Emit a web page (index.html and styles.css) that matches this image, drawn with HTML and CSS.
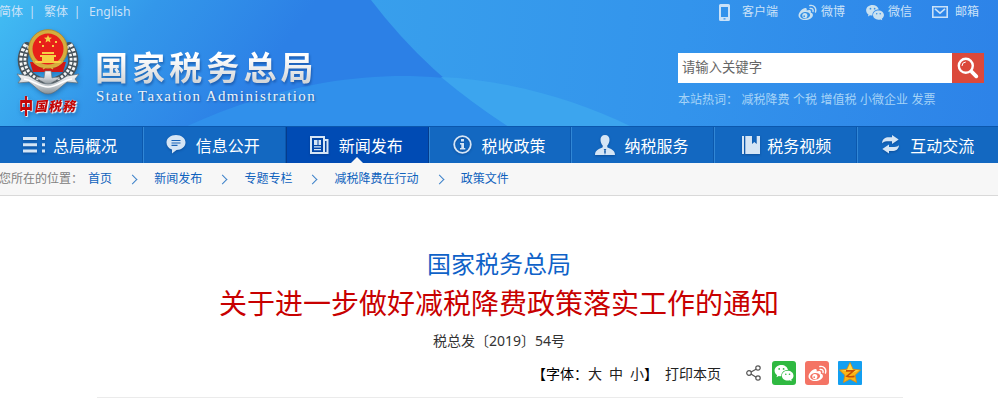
FILE: index.html
```
<!DOCTYPE html>
<html lang="zh-CN">
<head>
<meta charset="utf-8">
<title>国家税务总局</title>
<link rel="stylesheet" href="styles.css">
</head>
<body>
<svg class="defs" width="0" height="0" aria-hidden="true">
  <symbol id="wechat" viewBox="0 0 20 18">
    <path d="M7.4 1C3.5 1 .6 3.500.6 6.700c0 1.900 1 3.400 2.500 4.500L2.500 13.200l2.300-1.200c.8.200 1.600.3 2.500.3C7 8.500 10 5.800 14 5.900 13.400 3.100 10.800 1 7.400 1z"/>
    <path d="M13.700 6.800c-3.300 0-5.800 2.100-5.800 4.900s2.500 4.900 5.800 4.900c.7 0 1.400-.1 2-.3l2 1-.5-1.700c1.400-.9 2.300-2.300 2.300-3.900 0-2.800-2.600-4.900-5.800-4.900z"/>
    <g class="hole"><circle cx="5.200" cy="4.900" r=".9"/><circle cx="9.600" cy="4.900" r=".9"/><circle cx="11.800" cy="10.200" r=".8"/><circle cx="15.500" cy="10.200" r=".8"/></g>
  </symbol>
  <symbol id="weibo" viewBox="0 0 20 18">
    <path d="M8.300 4.300C9.500 4.600 9.400 6 9 7c2-.9 4.900-1.200 4.600 1.300 0 .5-.2.800-.2 1 1.500.3 2.600 1.200 2.300 2.900-.4 2.700-4 4.800-8.200 4.800C3.500 17 .5 15 .5 12.200.5 8.600 5.500 3.600 8.300 4.300z"/>
    <ellipse class="hole" cx="7.500" cy="12" rx="5.300" ry="3.500" transform="rotate(-8 7.500 12)"/>
    <circle cx="7.200" cy="12.200" r="2.700"/>
    <circle class="hole" cx="6.500" cy="12.900" r=".9"/>
    <path class="line" d="M12.800 4.700c2-.4 3.600 1.200 3 3.200M12.500 1.600c4.200-.8 7.300 2.800 5.900 6.900"/>
  </symbol>
</svg>

<header class="header">
  <svg class="header-bg" viewBox="0 0 998 127" preserveAspectRatio="none" aria-hidden="true">
    <defs>
      <linearGradient id="sky" gradientUnits="userSpaceOnUse" x1="0" y1="0" x2="210" y2="150"><stop offset="0" stop-color="#42bdf3"/><stop offset=".5" stop-color="#3397ea"/><stop offset="1" stop-color="#2c80e6"/></linearGradient>
      <linearGradient id="right" gradientUnits="userSpaceOnUse" x1="370" y1="0" x2="998" y2="60"><stop offset="0" stop-color="#389fec"/><stop offset=".5" stop-color="#3394ec"/><stop offset="1" stop-color="#2d83e8"/></linearGradient>
    </defs>
    <path fill="url(#sky)" d="M0 0h998v127H0z"/>
    <path fill="#3090eb" d="M185 127C250 98 320 76 405 76c30 0 60 5 115 8v43z"/>
    <path fill="url(#right)" d="M371 0Q428 75 509 127H998V0z"/>
    <path fill="#3ca5ee" d="M441 77C510 80 580 101 632 127H509Q472 103 441 77z"/>
  </svg>

  <div class="topbar">
    <div class="langs"><a>简体</a><i>|</i><a>繁体</a><i>|</i><a class="en">English</a></div>
    <div class="quick">
      <a class="phone"><svg width="11" height="17" viewBox="0 0 11 17"><path fill="#c9e1f8" fill-rule="evenodd" d="M1.500 0h8A1.500 1.500 0 0 1 11 1.500v14A1.500 1.500 0 0 1 9.500 17h-8A1.500 1.500 0 0 1 0 15.500v-14A1.500 1.500 0 0 1 1.500 0zM2 3v10h7V3zM4.500 14.300v1.200h2v-1.200z"/></svg>客户端</a>
      <a class="wb"><svg class="pale" width="19" height="17"><use href="#weibo"/></svg>微博</a>
      <a class="wx"><svg class="pale" width="20" height="17"><use href="#wechat"/></svg>微信</a>
      <a class="mail"><svg width="16" height="12" viewBox="0 0 16 12"><path fill="none" stroke="#c9e1f8" stroke-width="1.600" d="M.8.8h14.400v10.400H.8zM3 2.800l5 4.400 5-4.400"/></svg>邮箱</a>
    </div>
  </div>

  <div class="masthead">
    <a class="logo">
      <span class="crest">
        <svg width="64" height="66" viewBox="0 0 64 66">
          <defs><linearGradient id="silver" x1="0" y1="0" x2="0" y2="1"><stop offset="0" stop-color="#fafafa"/><stop offset=".55" stop-color="#c9ced2"/><stop offset="1" stop-color="#858e94"/></linearGradient></defs>
          <g fill="none" stroke-linecap="round">
            <path stroke="#46525a" stroke-width="10" d="M11 18C2 32 8 47 24 53M53 18c9 14 3 29-13 35"/>
            <path stroke="#f3f5f5" stroke-width="7" stroke-linecap="butt" stroke-dasharray="2.800 1.700" d="M11 16C2 32 8 47 24 53M53 16c9 16 3 31-13 37"/>
            <path stroke="#46525a" stroke-width="1.200" d="M11 18C2 32 8 47 24 53M53 18c9 14 3 29-13 35"/>
          </g>
          <path fill="#cf1a16" d="M14 33h36l-3 10H17z"/>
          <path fill="url(#silver)" stroke="#6d7679" stroke-width=".6" d="M29 42h6l1 7c3-1 5-1 8 0l-12 7-12-7c3-1 5-1 8 0z"/>
          <circle cx="32" cy="20" r="17.500" fill="#e8201a" stroke="#d4ad3e" stroke-width="4"/>
          <circle cx="32" cy="20" r="19.300" fill="none" stroke="#a97e24" stroke-width=".7"/>
          <path fill="#f6cf45" d="M32 6l1.100 2.600 2.900.2-2.200 1.800.7 2.800L32 11.900l-2.500 1.500.7-2.800L28 8.800l2.900-.2zM23 12h2v2h-2zM39 12h2v2h-2zM26 16h2v2h-2zM36 16h2v2h-2zM26 23h12v2H26zM24 26h16v2h-2v4H26v-4h-2zM19 32h26v2H19z"/>
          <path fill="none" stroke="#dab140" stroke-width="1.500" d="M17 32c4 5 9 7 15 5 6 2 11 0 15-5M27 40q5-5 10 0"/>
          <path fill="url(#silver)" stroke="#626d72" stroke-width=".7" d="M1 45l12 2c7 4 12 8 19 8s12-4 19-8l12-2-4 5 3 4-11-1C44 58 39 65 32 65S20 58 13 53L2 54l3-4z"/>
          <path fill="none" stroke="#fff" stroke-width="1.600" d="M8 50c9 1 15 8 24 8s15-7 24-8"/>
        </svg>
        <span class="crest-name"><b>中</b><b>国</b><b>税</b><b>務</b></span>
      </span>
      <span class="wordmark">
        <span class="cn">国家税务总局</span>
        <span class="lat">State Taxation Administration</span>
      </span>
    </a>
    <div class="search">
      <div class="search-box">
        <span class="field">请输入关键字</span>
        <span class="btn"><svg width="22" height="22" viewBox="0 0 22 22"><circle cx="8.800" cy="8.800" r="7" fill="none" stroke="#fff" stroke-width="2.400"/><path fill="none" stroke="#fff" stroke-width="1" d="M5 9q0-3.800 3.800-4"/><path stroke="#fff" stroke-width="3.800" stroke-linecap="round" d="M14.800 14.800l4.500 4.500"/></svg></span>
      </div>
      <div class="hot"><span>本站热词：</span><a>减税降费</a><a>个税</a><a>增值税</a><a>小微企业</a><a>发票</a></div>
    </div>
  </div>
</header>

<nav class="nav">
  <a><span class="ico"><svg width="24" height="16" viewBox="0 0 24 16"><path fill="#d5e5f5" d="M1 0h14v3H1zM1 6.300h14v3H1zM1 12.600h14v3H1zM20 0h3v3h-3zM20 6.300h3v3h-3zM20 12.600h3v3h-3z"/></svg></span>总局概况</a>
  <a><span class="ico"><svg width="20" height="19" viewBox="0 0 20 19"><path fill="#d5e5f5" d="M10 0c5.500 0 9.500 3.300 9.500 7.500S15.500 15 10.500 15L6 18.600v-4.200C2.500 13.500.5 10.800.5 7.500.5 3.300 4.500 0 10 0z"/><path stroke="#1a64b8" stroke-width="1.200" d="M5.500 5.500h9M5.500 8h9M5.500 10.400h6"/></svg></span>信息公开</a>
  <a class="on"><span class="ico"><svg width="19" height="18" viewBox="0 0 19 18"><path fill="none" stroke="#d5e5f5" stroke-width="2" d="M14 1H1v16h16.500V4H14zM14 3v13.500"/><path fill="#d5e5f5" d="M4 4h3.500v5H4zM8.500 4H11v5H8.500zM4 10.300h7v1.300H4zM4 13h7v1.300H4z"/></svg></span>新闻发布</a>
  <a><span class="ico"><svg width="19" height="19" viewBox="0 0 19 19"><circle cx="9.500" cy="9.500" r="8.300" fill="none" stroke="#d5e5f5" stroke-width="1.800"/><path fill="#d5e5f5" d="M8 4h3v2.500H8zM7 8h4v5h1.300v1.500H7V13h1.300V9.500H7z"/></svg></span>税收政策</a>
  <a><span class="ico"><svg width="20" height="20" viewBox="0 0 20 20"><path fill="#d5e5f5" d="M10 0c3 0 4.700 2 4.500 5 0 2-1 4.300-2.200 5.500v1.700c2 1.300 7.700 2 7.700 7.800H0c0-5.800 5.700-6.500 7.700-7.800v-1.700C6.500 9.300 5.500 7 5.500 5 5.300 2 7 0 10 0z"/><path fill="#185fad" d="M8.600 14h2.800l-.8 1.400.3 1.600-.9 3-.9-3 .3-1.600z"/></svg></span>纳税服务</a>
  <a><span class="ico book"><svg width="18" height="18" viewBox="0 0 18 18"><path fill="#d5e5f5" d="M0 0h2v18H0zM3.300 0H10v8l2.300-2L14.700 8V0H18v18H3.300z"/></svg></span>税务视频</a>
  <a><span class="ico"><svg width="19" height="19" viewBox="0 0 19 19"><path fill="#d5e5f5" d="M1 8.200c.3-4 3-5.900 7-5.900h3V0l6.700 4.400L11 9V6.300H8c-3 0-5.300.3-7 1.900zM18 10.200c-.3 4-3 5.900-7 5.900H8v2.300L1.300 14 8 9.400v2.700h3c3 0 5.300-.3 7-1.900z"/></svg></span>互动交流</a>
</nav>

<div class="crumbs">
  <span>您所在的位置：</span>
  <a>首页</a><i></i><a>新闻发布</a><i></i><a>专题专栏</a><i></i><a>减税降费在行动</a><i></i><a>政策文件</a>
</div>

<main class="article">
  <h2>国家税务总局</h2>
  <h1>关于进一步做好减税降费政策落实工作的通知</h1>
  <p class="docno">税总发〔2019〕54号</p>
  <div class="tools">
    <span class="size"><b>【字体：</b><a>大</a><a>中</a><a>小</a><b>】</b></span>
    <a class="print">打印本页</a>
    <svg class="share" width="15" height="16" viewBox="0 0 15 16"><path fill="none" stroke="#555" stroke-width="1.200" d="M5 7l5.500-3M5 9l5.500 3.500"/><g fill="#fff" stroke="#555" stroke-width="1.200"><circle cx="3" cy="8" r="2.300"/><circle cx="12" cy="3" r="2.200"/><circle cx="12" cy="13" r="2.200"/></g></svg>
    <span class="tile green"><svg width="20" height="18"><use href="#wechat"/></svg></span>
    <span class="tile coral"><svg width="19" height="17"><use href="#weibo"/></svg></span>
    <span class="tile blue"><svg width="24" height="24" viewBox="0 0 24 24"><path fill="#fdb515" stroke="#e58a08" stroke-width=".8" stroke-linejoin="round" d="M12 1.500l3.100 6.700 7.400.9-5.400 5.100 1.400 7.300L12 18l-6.500 3.500 1.400-7.300L1.500 9.100l7.400-.9z"/><path fill="#ffd94c" d="M12 2.500l2.700 6.200 6.500.9-6.200 2L9 10l-6-.4 6.300-.9z"/><path fill="none" stroke="#c84f05" stroke-width="1.600" d="M8 9.900h7.500L9 15.200q3.500 1.100 7.500.2"/></svg></span>
  </div>
</main>
</body>
</html>
```
FILE: styles.css
```
* { box-sizing: border-box; }
body {
  margin: 0;
  width: 998px;
  height: 403px;
  overflow: hidden;
  background: #fff;
  font: 12px/16px "Noto Sans", "Noto Sans CJK SC", sans-serif;
}
svg { display: block; flex: none; }
.defs { position: absolute; }
i, b { font-style: normal; font-weight: normal; }

.header { position: relative; height: 126px; overflow: hidden; }
.header-bg { position: absolute; inset: 0; width: 998px; height: 127px; z-index: -1; }

.topbar { display: flex; justify-content: space-between; height: 24px; padding-right: 19px; color: #cbe2f8; line-height: 24px; }
.langs { display: flex; margin-left: -1px; }
.langs i { width: 21px; padding-right: 3px; text-align: center; }
.langs .en { font-size: 12.2px; }
.quick { display: flex; }
.quick a { display: flex; align-items: center; }
.phone { gap: 12px; }
.wb { gap: 4px; margin-left: 20px; }
.wx { gap: 3px; margin-left: 20px; }
.mail { gap: 7px; margin-left: 20px; }
.pale { fill: #c9e1f0; --line: #c9e1f0; --hole: #3390e6; }
.hole { fill: var(--hole); }
.line { fill: none; stroke: var(--line); stroke-width: 1.5; stroke-linecap: round; }

.masthead { display: flex; justify-content: space-between; padding: 0 14px 0 16px; }
.logo { display: flex; }
.crest { width: 64px; padding-top: 5px; filter: drop-shadow(1px 2px 2px rgba(10, 60, 120, .4)); }
.crest-name { display: flex; margin-left: 3px; color: #c40808; text-shadow: 0 0 1px #fff, 1px 1px 1px #fff; }
.crest-name b { width: 14px; font: italic 900 13px/22px "Noto Sans CJK TC", sans-serif; transform: rotate(-4deg); }
.crest-name b:first-child { width: 15px; font-size: 20px; font-style: normal; transform: scaleX(.7); transform-origin: left; }
.wordmark { display: flex; flex-direction: column; padding: 23px 0 0 15px; }
.cn {
  font: 700 33px/38px "Noto Sans CJK SC", sans-serif;
  height: 41px;
  letter-spacing: 4.1px;
  background: linear-gradient(#fff 25%, #d0d3d6 90%);
  -webkit-background-clip: text;
  background-clip: text;
  color: transparent;
  filter: drop-shadow(1px 2px 1px rgba(10, 50, 120, .45));
}
.lat { padding-left: 1px; font: 15px/17px "Liberation Serif", serif; letter-spacing: 1.4px; color: #edf3f8; white-space: nowrap; text-shadow: 1px 1px 2px rgba(10, 50, 120, .6); }

.search { width: 306px; padding-top: 29px; }
.search-box { display: flex; height: 30px; }
.field { width: 274px; padding-left: 4px; background: #fff; color: #666; font-size: 13.33px; line-height: 29px; }
.btn { display: flex; align-items: center; justify-content: center; width: 32px; background: #db493b; }
.hot { display: flex; gap: 3.5px; color: #a5d3f7; line-height: 34px; }
.hot span { width: 60px; }

.nav {
  display: grid;
  grid-template-columns: repeat(7, 142.86px);
  height: 37px;
  border-top: 1px solid #0b57ad;
  background: #1368c1;
}
.nav a { display: flex; align-items: center; height: 36px; padding-top: 2px; border-left: 1px solid #3187d6; border-right: 1px solid #0c58ad; color: #fff; font-size: 16px; line-height: 34px; }
.nav a:first-child { border-left-color: transparent; }
.ico { display: flex; justify-content: center; width: 24px; margin: -3px 7.500px 0 20.500px; filter: drop-shadow(0 1px 1px rgba(0, 40, 100, .4)); }
.nav .book { padding-left: 6px; }
.nav .on { position: relative; background: #004bb4; border-color: #053c8c; }
.on::after { content: ""; position: absolute; left: 64px; bottom: 0; border: 6px solid transparent; border-top: 0; border-bottom-color: #f7f7f7; }

.crumbs { display: flex; align-items: center; height: 33px; background: #f7f7f7; border-bottom: 1px solid #d9d9d9; color: #0f62bd; }
.crumbs span { width: 89px; margin-left: -1px; color: #808080; white-space: nowrap; }
.crumbs i { display: flex; width: 42.2px; padding-left: 17px; }
.crumbs i::after { content: ""; width: 6px; height: 6px; border: solid #3d82ca; border-width: 1px 1px 0 0; transform: rotate(45deg); }

.article { display: flex; flex-direction: column; width: 806px; height: 202px; margin-left: 97px; padding-top: 50px; border-bottom: 1px solid #ebebeb; text-align: center; }
h1, h2, p { position: relative; left: -1px; margin: 0; font-weight: 400; }
h2 { color: #0f62c8; font-size: 24px; line-height: 36px; }
h1 { color: #c80000; font-size: 28px; line-height: 42px; }
.docno { color: #333; font-size: 14px; line-height: 34px; }
.tools { display: flex; align-items: center; height: 24px; margin-top: 3px; padding-left: 435px; font-family: "Noto Sans CJK SC", sans-serif; font-size: 14px; line-height: 24px; color: #222; }
.size { display: flex; width: 133px; }
.size b { color: #000; }
.size a { width: 21px; text-align: left; }
.size a:nth-of-type(3) { width: 14px; }
.share { margin: 0 11px 0 25px; }
.tile { display: flex; align-items: center; justify-content: center; width: 24px; height: 24px; margin-right: 9px; border-radius: 3px; fill: #fff; --line: #fff; }
.green { background: #2fb941; --hole: #2fb941; }
.coral { background: #f47465; --hole: #f47465; }
.blue { background: #139ff0; border-radius: 1px; }
```
